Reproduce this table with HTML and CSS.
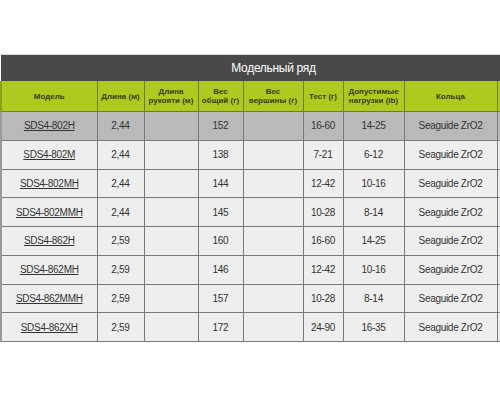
FILE: index.html
```html
<!DOCTYPE html>
<html lang="ru">
<head>
<meta charset="utf-8">
<title>Модельный ряд</title>
<link rel="stylesheet" href="styles.css">
</head>
<body>
<div class="page">
  <table class="models">
    <colgroup>
      <col class="c1"><col class="c2"><col class="c3"><col class="c4"><col class="c5">
      <col class="c6"><col class="c7"><col class="c8"><col class="c9">
    </colgroup>
    <thead>
      <tr class="title-row"><th colspan="9">Модельный ряд</th></tr>
      <tr class="head-row">
        <th>Модель</th>
        <th>Длина (м)</th>
        <th>Длина<br>рукояти (м)</th>
        <th>Вес<br>общий (г)</th>
        <th>Вес<br>вершины (г)</th>
        <th>Тест (г)</th>
        <th>Допустимые<br>нагрузки (lb)</th>
        <th>Кольца</th>
        <th></th>
      </tr>
    </thead>
    <tbody>
      <tr class="active"><td><a href="#">SDS4-802H</a></td><td>2,44</td><td></td><td>152</td><td></td><td>16-60</td><td>14-25</td><td>Seaguide ZrO2</td><td></td></tr>
      <tr><td><a href="#">SDS4-802M</a></td><td>2,44</td><td></td><td>138</td><td></td><td>7-21</td><td>6-12</td><td>Seaguide ZrO2</td><td></td></tr>
      <tr><td><a href="#">SDS4-802MH</a></td><td>2,44</td><td></td><td>144</td><td></td><td>12-42</td><td>10-16</td><td>Seaguide ZrO2</td><td></td></tr>
      <tr><td><a href="#">SDS4-802MMH</a></td><td>2,44</td><td></td><td>145</td><td></td><td>10-28</td><td>8-14</td><td>Seaguide ZrO2</td><td></td></tr>
      <tr><td><a href="#">SDS4-862H</a></td><td>2,59</td><td></td><td>160</td><td></td><td>16-60</td><td>14-25</td><td>Seaguide ZrO2</td><td></td></tr>
      <tr><td><a href="#">SDS4-862MH</a></td><td>2,59</td><td></td><td>146</td><td></td><td>12-42</td><td>10-16</td><td>Seaguide ZrO2</td><td></td></tr>
      <tr><td><a href="#">SDS4-862MMH</a></td><td>2,59</td><td></td><td>157</td><td></td><td>10-28</td><td>8-14</td><td>Seaguide ZrO2</td><td></td></tr>
      <tr><td><a href="#">SDS4-862XH</a></td><td>2,59</td><td></td><td>172</td><td></td><td>24-90</td><td>16-35</td><td>Seaguide ZrO2</td><td></td></tr>
    </tbody>
  </table>
</div>
</body>
</html>
```

FILE: styles.css
```css
html, body {
  margin: 0;
  padding: 0;
  background: #ffffff;
}

.page {
  width: 500px;
  height: 400px;
  overflow: hidden;
  padding-top: 54px;
  box-sizing: border-box;
}

.models {
  width: 545px;
  table-layout: fixed;
  border-collapse: collapse;
  font-family: "Liberation Sans", Arial, sans-serif;
  color: #333333;
  border-top: 1px solid #d8d8d8;
}

.c1 { width: 96px; }
.c2 { width: 47px; }
.c3 { width: 54px; }
.c4 { width: 45px; }
.c5 { width: 60px; }
.c6 { width: 40px; }
.c7 { width: 61px; }
.c8 { width: 93px; }
.c9 { width: 49px; }

.title-row th {
  height: 26px;
  padding: 0;
  background: #494949;
  color: #ffffff;
  font-size: 12px;
  font-weight: normal;
  letter-spacing: -0.3px;
  text-align: center;
  vertical-align: middle;
}

.head-row th {
  height: 30px;
  padding: 0 2px;
  background: #afca1f;
  color: #3a3a14;
  font-size: 8px;
  line-height: 9px;
  font-weight: bold;
  text-align: center;
  vertical-align: middle;
  border: 1px solid #6f7a2a;
  border-top: none;
}

.head-row th:first-child {
  border-left: 2px solid #8aa01a;
}

tbody td {
  height: 27.75px;
  padding: 0;
  background: #eeeeee;
  font-size: 10px;
  letter-spacing: -0.3px;
  text-align: center;
  vertical-align: middle;
  border: 1px solid #7a7a7a;
}

tbody td:first-child {
  border-left: 2px solid #9a9a9a;
}

tbody tr.active td {
  background: #b9b9b9;
}

tbody a {
  color: #333333;
  text-decoration: underline;
}
```
